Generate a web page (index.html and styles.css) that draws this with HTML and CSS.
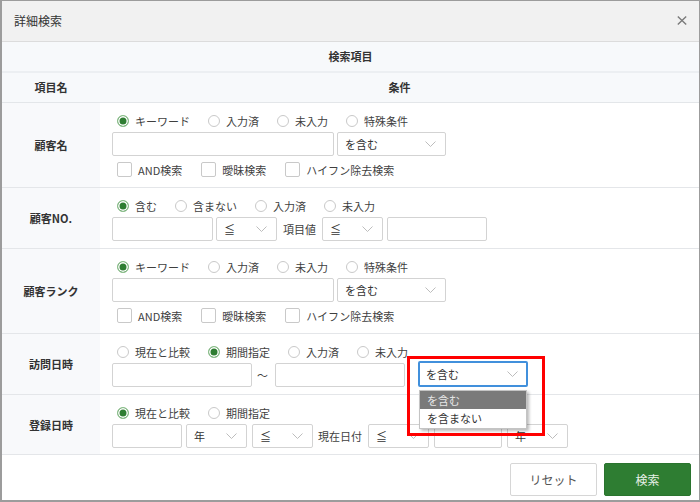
FILE: index.html
```html
<!DOCTYPE html>
<html lang="ja">
<head>
<meta charset="utf-8">
<title>詳細検索</title>
<link rel="stylesheet" href="styles.css">
</head>
<body>
<div class="modal">
  <div class="modal-header">
    <span class="modal-title">詳細検索</span>
    <svg class="close" width="10" height="9" viewBox="0 0 10 9"><path d="M0.8 0.6 L9.2 8.4 M9.2 0.6 L0.8 8.4" stroke="#7a7a7a" stroke-width="1.4" fill="none"/></svg>
  </div>
  <div class="modal-body">
    <table class="search-table">
      <colgroup><col class="col-label"><col></colgroup>
      <thead>
        <tr class="th-top"><th colspan="2">検索項目</th></tr>
        <tr class="th-sub"><th>項目名</th><th>条件</th></tr>
      </thead>
      <tbody>
        <tr>
          <th class="label">顧客名</th>
          <td class="cond">
            <div class="radios">
              <span class="radio"><span class="mark on"></span>キーワード</span>
              <span class="radio"><span class="mark"></span>入力済</span>
              <span class="radio"><span class="mark"></span>未入力</span>
              <span class="radio"><span class="mark"></span>特殊条件</span>
            </div>
            <div class="controls">
              <span class="field w222"></span>
              <span class="field select w109 ml3">を含む<svg class="chev" width="11" height="6" viewBox="0 0 11 6"><polyline points="0.5,0.5 5.5,5.5 10.5,0.5" fill="none" stroke="#bdbdbd" stroke-width="1"/></svg></span>
            </div>
            <div class="checks">
              <span class="check"><span class="box"></span>AND検索</span>
              <span class="check"><span class="box"></span>曖昧検索</span>
              <span class="check"><span class="box"></span>ハイフン除去検索</span>
            </div>
          </td>
        </tr>
        <tr>
          <th class="label">顧客NO.</th>
          <td class="cond">
            <div class="radios">
              <span class="radio"><span class="mark on"></span>含む</span>
              <span class="radio"><span class="mark"></span>含まない</span>
              <span class="radio"><span class="mark"></span>入力済</span>
              <span class="radio"><span class="mark"></span>未入力</span>
            </div>
            <div class="controls">
              <span class="field w101"></span>
              <span class="field select w61 ml3">≦<svg class="chev" width="11" height="6" viewBox="0 0 11 6"><polyline points="0.5,0.5 5.5,5.5 10.5,0.5" fill="none" stroke="#bdbdbd" stroke-width="1"/></svg></span>
              <span class="txt ml6 mr6">項目値</span>
              <span class="field select w61">≦<svg class="chev" width="11" height="6" viewBox="0 0 11 6"><polyline points="0.5,0.5 5.5,5.5 10.5,0.5" fill="none" stroke="#bdbdbd" stroke-width="1"/></svg></span>
              <span class="field w100 ml4"></span>
            </div>
          </td>
        </tr>
        <tr>
          <th class="label">顧客ランク</th>
          <td class="cond">
            <div class="radios">
              <span class="radio"><span class="mark on"></span>キーワード</span>
              <span class="radio"><span class="mark"></span>入力済</span>
              <span class="radio"><span class="mark"></span>未入力</span>
              <span class="radio"><span class="mark"></span>特殊条件</span>
            </div>
            <div class="controls">
              <span class="field w222"></span>
              <span class="field select w109 ml3">を含む<svg class="chev" width="11" height="6" viewBox="0 0 11 6"><polyline points="0.5,0.5 5.5,5.5 10.5,0.5" fill="none" stroke="#bdbdbd" stroke-width="1"/></svg></span>
            </div>
            <div class="checks">
              <span class="check"><span class="box"></span>AND検索</span>
              <span class="check"><span class="box"></span>曖昧検索</span>
              <span class="check"><span class="box"></span>ハイフン除去検索</span>
            </div>
          </td>
        </tr>
        <tr>
          <th class="label">訪問日時</th>
          <td class="cond">
            <div class="radios">
              <span class="radio"><span class="mark"></span>現在と比較</span>
              <span class="radio"><span class="mark on"></span>期間指定</span>
              <span class="radio"><span class="mark"></span>入力済</span>
              <span class="radio"><span class="mark"></span>未入力</span>
            </div>
            <div class="controls">
              <span class="field w140"></span>
              <span class="txt tilde">～</span>
              <span class="field w130"></span>
              <span class="field select focus w110 ml13">を含む<svg class="chev" width="11" height="6" viewBox="0 0 11 6"><polyline points="0.5,0.5 5.5,5.5 10.5,0.5" fill="none" stroke="#bdbdbd" stroke-width="1"/></svg>
                <span class="dropdown">
                  <span class="opt active">を含む</span>
                  <span class="opt">を含まない</span>
                </span>
                <span class="annot"></span>
              </span>
            </div>
          </td>
        </tr>
        <tr>
          <th class="label">登録日時</th>
          <td class="cond">
            <div class="radios">
              <span class="radio"><span class="mark on"></span>現在と比較</span>
              <span class="radio"><span class="mark"></span>期間指定</span>
            </div>
            <div class="controls">
              <span class="field w70"></span>
              <span class="field select w61 ml4">年<svg class="chev" width="11" height="6" viewBox="0 0 11 6"><polyline points="0.5,0.5 5.5,5.5 10.5,0.5" fill="none" stroke="#bdbdbd" stroke-width="1"/></svg></span>
              <span class="field select w61 ml5">≦<svg class="chev" width="11" height="6" viewBox="0 0 11 6"><polyline points="0.5,0.5 5.5,5.5 10.5,0.5" fill="none" stroke="#bdbdbd" stroke-width="1"/></svg></span>
              <span class="txt ml5 mr6">現在日付</span>
              <span class="field select w61">≦<svg class="chev" width="11" height="6" viewBox="0 0 11 6"><polyline points="0.5,0.5 5.5,5.5 10.5,0.5" fill="none" stroke="#bdbdbd" stroke-width="1"/></svg></span>
              <span class="field w68 ml5"></span>
              <span class="field select w61 ml5">年<svg class="chev" width="11" height="6" viewBox="0 0 11 6"><polyline points="0.5,0.5 5.5,5.5 10.5,0.5" fill="none" stroke="#bdbdbd" stroke-width="1"/></svg></span>
            </div>
          </td>
        </tr>
      </tbody>
    </table>
  </div>
  <div class="modal-footer">
    <button class="btn btn-reset" type="button">リセット</button>
    <button class="btn btn-search" type="button">検索</button>
  </div>
</div>
</body>
</html>
```

FILE: styles.css
```css
* { box-sizing: border-box; }
html, body { margin: 0; padding: 0; background: #fff; }
body {
  font-family: "Noto Sans CJK JP", "Noto Sans", sans-serif;
  font-size: 11px;
  color: #3f3f3f;
}
.modal {
  width: 700px;
  height: 502px;
  border: 1px solid #9c9c9c;
  border-left-width: 2px;
  border-bottom-width: 2px;
  display: flex;
  flex-direction: column;
  background: #fff;
}
.modal-header {
  flex: none;
  height: 41px;
  background: #f1f1f1;
  border-bottom: 1px solid #dcdcdc;
  display: flex;
  align-items: center;
  justify-content: space-between;
  padding: 0 12px;
}
.modal-title { font-size: 12px; line-height: 16px; color: #333; }
.close { display: block; margin-top: -2px; }
.modal-body {
  flex: none;
  height: 412px;
  overflow: hidden;
  position: relative;
}
.search-table {
  width: 100%;
  border-collapse: separate;
  border-spacing: 0;
  table-layout: fixed;
}
.col-label { width: 98px; }
.search-table thead th {
  background: #f7f9fb;
  color: #333;
  font-weight: bold;
  font-size: 11px;
  line-height: 17px;
  padding: 6px 0;
  text-align: center;
}
.th-top th { border-bottom: 2px solid #eceff2; }
.th-sub th { border-bottom: 1px solid #e3e6e9; }
.label {
  background: #f8f9fb;
  color: #333;
  font-weight: bold;
  font-size: 11px;
  text-align: center;
  vertical-align: middle;
  border-bottom: 1px solid #e4e6e9;
  padding: 0;
}
.cond {
  vertical-align: top;
  padding: 9px 12px 7px 12px;
  border-bottom: 1px solid #e4e6e9;
}
.radios {
  display: flex;
  align-items: center;
  height: 18px;
  padding-left: 5px;
}
.radio {
  display: inline-flex;
  align-items: center;
  margin-right: 18px;
  line-height: 18px;
  white-space: nowrap;
}
.mark {
  width: 12px;
  height: 12px;
  border-radius: 50%;
  border: 1px solid #c9c9c9;
  background: #fff;
  margin-right: 6px;
  flex: none;
}
.mark.on {
  border-color: #8cc08c;
  background: #2e7d32;
  box-shadow: inset 0 0 0 1.5px #fff;
}
.controls {
  display: flex;
  align-items: center;
  height: 24px;
  margin-top: 2px;
}
.field {
  flex: none;
  height: 24px;
  border: 1px solid #d3d3d3;
  border-radius: 2px;
  background: #fff;
}
.select {
  display: flex;
  align-items: center;
  justify-content: space-between;
  padding: 0 9px 0 7px;
  color: #333;
  line-height: 16px;
}
.chev { display: block; flex: none; }
.select.focus {
  position: relative;
  height: 26px;
  margin-top: -2px;
  margin-bottom: 0;
  border: 2px solid #4190dc;
  padding: 0 8px 0 6px;
}
.dropdown {
  position: absolute;
  left: -1px;
  top: 27px;
  width: 108px;
  background: #fff;
  border: 1px solid #c4c4c4;
  box-shadow: 2px 2px 3px rgba(0, 0, 0, 0.28);
  display: flex;
  flex-direction: column;
  z-index: 5;
}
.opt {
  display: block;
  height: 18px;
  line-height: 18px;
  padding-left: 7px;
  color: #333;
}
.opt + .opt { height: 19px; }
.opt.active { background: #7a7a7a; color: #e6e6e6; }
.annot {
  position: absolute;
  left: -13px;
  top: -7px;
  width: 138px;
  height: 80px;
  border: 3px solid #f00;
  z-index: 6;
}
.txt { flex: none; line-height: 16px; white-space: nowrap; }
.tilde { margin-left: 5px; margin-right: 7px; }
.checks {
  display: flex;
  align-items: center;
  height: 21px;
  margin-top: 3px;
  padding-left: 5px;
}
.check {
  display: inline-flex;
  align-items: center;
  margin-right: 19px;
  white-space: nowrap;
}
.box {
  width: 15px;
  height: 15px;
  border: 1px solid #c9c9c9;
  border-radius: 2px;
  background: #fff;
  margin-right: 6px;
  flex: none;
}
.w222 { width: 222px; }
.w140 { width: 140px; }
.w130 { width: 130px; }
.w110 { width: 110px; }
.w109 { width: 109px; }
.w101 { width: 101px; }
.w100 { width: 100px; }
.w70 { width: 70px; }
.w68 { width: 68px; }
.w61 { width: 61px; }
.ml3 { margin-left: 3px; }
.ml4 { margin-left: 4px; }
.ml5 { margin-left: 5px; }
.ml6 { margin-left: 6px; }
.ml13 { margin-left: 13px; }
.mr6 { margin-right: 6px; }
.modal-footer {
  flex: 1;
  border-top: 1px solid #e4e6e9;
  display: flex;
  justify-content: flex-end;
  align-items: flex-start;
  gap: 7px;
  padding: 8px 8px 0 0;
}
.btn {
  width: 87px;
  height: 33px;
  border-radius: 2px;
  font-family: "Noto Sans CJK JP", "Noto Sans", sans-serif;
  font-size: 12px;
  cursor: pointer;
  padding: 0;
}
.btn-reset {
  background: #fff;
  border: 1px solid #d6d6d6;
  color: #555;
}
.btn-search {
  background: #2e7d32;
  border: 1px solid #2a742e;
  color: #e8f1e8;
}
```
